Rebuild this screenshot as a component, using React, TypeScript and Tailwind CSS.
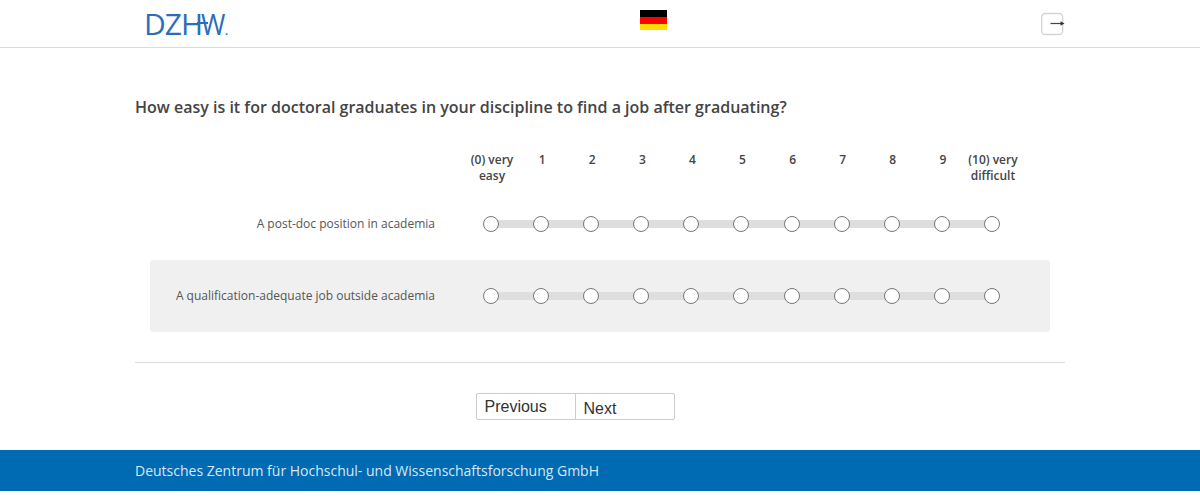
const scale = ["(0) very easy", "1", "2", "3", "4", "5", "6", "7", "8", "9", "(10) very difficult"];

const rows = [
  { label: "A post-doc position in academia", shaded: false },
  { label: "A qualification-adequate job outside academia", shaded: true },
];

function Logo() {
  return (
    <div className="relative flex h-[30px] w-[90px] items-center font-['Open_Sans',sans-serif] text-[30px] leading-none font-normal tracking-[-1px] text-[#2a6ebb]">
      <span className="-ml-[1px]">DZH</span>
      <span className="ml-[-1px] inline-block origin-left scale-x-[0.88]">W</span>
      <span className="absolute top-[16px] left-[80px] text-[11px] font-bold">.</span>
      <span className="absolute top-[13px] left-[52px] h-[2px] w-[11px] bg-[#2a6ebb]" />
    </div>
  );
}

function Flag() {
  return (
    <div className="flex h-[20px] w-[27px] flex-col">
      <div className="h-[7px] bg-black" />
      <div className="h-[7px] bg-[#ff0000]" />
      <div className="h-[6px] bg-[#ffdd00]" />
    </div>
  );
}

function LogoutIcon() {
  return (
    <svg width="24" height="24" viewBox="0 0 24 24" fill="none">
      <rect x="0.7" y="1.5" width="21" height="21" rx="3.5" stroke="#d4d4d4" strokeWidth="1.3" />
      <path d="M9.5 11.5h10.5" stroke="#444" strokeWidth="1.2" />
      <path d="M19.5 9.3L23.5 11.5l-4 2.2z" fill="#333" />
    </svg>
  );
}

function Scale() {
  return (
    <div className="relative grid w-[551px] grid-cols-11">
      <div className="absolute top-[4px] right-[25px] left-[25px] h-[8px] bg-[#dedede]" />
      {scale.map((s) => (
        <div key={s} className="relative flex justify-center">
          <span className="h-[16px] w-[16px] rounded-full border border-[#767676] bg-white" />
        </div>
      ))}
    </div>
  );
}

export default function App() {
  return (
    <div className="min-h-[500px] bg-white font-['Open_Sans',sans-serif] text-[#444]">
      <header className="h-[48px] border-b border-[#dcdcdc]">
        <div className="mx-auto flex h-full w-[930px] items-start">
          <div className="w-[505px] pt-[9px] pl-[10px]">
            <Logo />
          </div>
          <div className="pt-[10px]">
            <Flag />
          </div>
          <div className="flex flex-1 justify-end pt-[12px]">
            <LogoutIcon />
          </div>
        </div>
      </header>

      <main className="mx-auto w-[930px]">
        <h1 className="pt-[47px] text-[16px] leading-[24px] font-semibold">
          How easy is it for doctoral graduates in your discipline to find a job after graduating?
        </h1>

        <div className="mt-[33px] ml-[332px] grid h-[32px] w-[551px] grid-cols-11 text-center text-[12px] leading-[16px] font-semibold">
          {scale.map((s) => (
            <div key={s} className="flex justify-center">
              <span className="w-[50px] shrink-0 whitespace-pre-line">{s.replace(" very ", " very\n")}</span>
            </div>
          ))}
        </div>

        <div className="mt-[4px] border-b border-[#dcdcdc] pb-[30px]">
          {rows.map((r) => (
            <div
              key={r.label}
              className={
                r.shaded
                  ? "ml-[15px] flex h-[72px] w-[900px] items-center rounded-[3px] bg-[#f0f0f0]"
                  : "ml-[15px] flex h-[72px] w-[900px] items-center"
              }
            >
              <div className="w-[285px] text-right text-[12px] text-[#555]">{r.label}</div>
              <div className="ml-[31px]">
                <Scale />
              </div>
            </div>
          ))}
        </div>

        <div className="mt-[30px] flex justify-center pr-[50px] font-['Liberation_Sans',sans-serif] text-[16px] text-[#333]">
          <button className="h-[27px] w-[100px] rounded-l-[2px] border border-[#ccc] bg-white pl-[8px] text-left">
            Previous
          </button>
          <button className="-ml-[1px] h-[27px] w-[100px] rounded-r-[2px] border border-[#ccc] bg-white pt-[3px] pl-[8px] text-left">
            Next
          </button>
        </div>
      </main>

      <footer className="mt-[30px] h-[41px] bg-[#006ab3]">
        <div className="mx-auto flex h-full w-[930px] items-center text-[14px] text-[#d8e8f4]">
          Deutsches Zentrum für Hochschul- und Wissenschaftsforschung GmbH
        </div>
      </footer>
    </div>
  );
}
